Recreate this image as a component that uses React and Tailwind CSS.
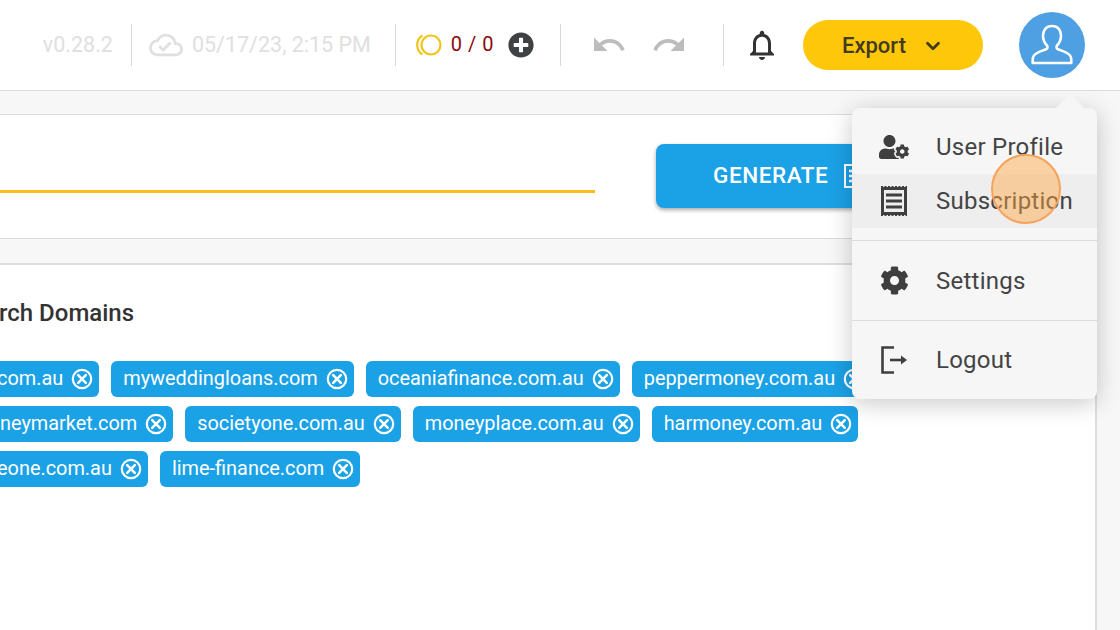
import React from 'react';
import { FaCog, FaPlusCircle, FaUserCog } from 'react-icons/fa';
import { MdNotificationsNone, MdOutlineCloudDone, MdRedo, MdUndo } from 'react-icons/md';
import { FiChevronDown } from 'react-icons/fi';

const rows = [
  { first: 'com.au', offset: '-ml-[3px]', rest: ['myweddingloans.com', 'oceaniafinance.com.au', 'peppermoney.com.au'] },
  { first: 'neymarket.com', offset: 'ml-0', rest: ['societyone.com.au', 'moneyplace.com.au', 'harmoney.com.au'] },
  { first: 'eone.com.au', offset: '-ml-[3px]', rest: ['lime-finance.com'] },
];

function RemoveIcon() {
  return (
    <svg width="22" height="22" viewBox="0 0 22 22" fill="none" stroke="white" strokeWidth="2.200" strokeLinecap="round" className="shrink-0">
      <circle cx="11" cy="11" r="9.200" />
      <path d="M7.200 7.200l7.600 7.600M14.800 7.200l-7.600 7.600" strokeWidth="2.600" />
    </svg>
  );
}

function Chip({ label, cut }) {
  return (
    <div className={`flex h-9 shrink-0 items-center gap-2 bg-[#1ba1e6] pr-[6px] text-[19.9px] text-white ${cut ? 'rounded-r-md' : 'rounded-md pl-3'}`}>
      <span className="pb-px">{label}</span>
      <RemoveIcon />
    </div>
  );
}

function Divider({ className }) {
  return <div className={`h-[42px] w-px bg-[#d8d8d8] ${className}`} />;
}

function ReceiptIcon() {
  return (
    <svg width="28" height="30" viewBox="0 0 28 30" fill="none" stroke="#3f3f3f">
      <rect x="2.500" y="2.500" width="23" height="25" strokeWidth="3" />
      <path d="M1 1h26M1 29h26" strokeWidth="2" strokeDasharray="2 1.500" />
      <path d="M6 9h16M6 15h16M6 21h16" strokeWidth="3" />
    </svg>
  );
}

function LogoutIcon() {
  return (
    <svg width="28" height="28" viewBox="0 0 28 28" fill="none" stroke="#3f3f3f" strokeWidth="2.600">
      <path d="M14 1.500H2.500v25H14" />
      <path d="M10 14h15" />
      <path d="M21 9.500l6 4.500-6 4.500z" fill="#3f3f3f" stroke="none" />
    </svg>
  );
}

function AvatarIcon() {
  return (
    <svg width="42" height="42" viewBox="0 0 42 42" fill="none" stroke="white" strokeWidth="2.600" strokeLinejoin="round">
      <path d="M21 2c-6 0-9 4.500-9 9.500 0 4 1.500 7.500 4 10 1 1.200 .5 3-1 3.800-4 1.700-12 3.200-13 8.200-.3 1.500-.3 4-.3 5.500h38.600c0-1.500 0-4-.3-5.500-1-5-9-6.500-13-8.200-1.500-.8-2-2.600-1-3.800 2.500-2.500 4-6 4-10C30 6.500 27 2 21 2z" />
    </svg>
  );
}

function CoinsIcon() {
  return (
    <svg width="26" height="22" viewBox="0 0 26 22" fill="none" stroke="#f0c419" strokeWidth="2.200">
      <circle cx="15" cy="11" r="9.500" />
      <path d="M6.500 1.500C3 3.500 1.200 7 1.200 11s1.800 7.500 5.300 9.500" />
    </svg>
  );
}

function GenerateIcon() {
  return (
    <svg width="24" height="24" viewBox="0 0 24 24" fill="none" stroke="white" className="shrink-0">
      <rect x="1" y="1" width="22" height="22" strokeWidth="2" />
      <path d="M5 7h14M5 12h14M5 17h14" strokeWidth="2.500" />
    </svg>
  );
}

function MenuRow({ icon, label, active, className }) {
  return (
    <div className={`flex items-center pl-7 text-[24px] tracking-[0.25px] text-[#444] ${active ? 'bg-[#eeeeee]' : ''} ${className}`}>
      <div className="flex w-[56px] shrink-0 items-center">{icon}</div>
      <span className="whitespace-nowrap">{label}</span>
    </div>
  );
}

export default function App() {
  return (
    <div className="relative h-[630px] w-[1120px] overflow-hidden bg-[#f7f7f7] font-['Roboto',sans-serif]">
      <header className="flex h-[91px] items-center justify-end border-b border-[#dcdcdc] bg-white pr-[35px]">
        <span className="text-[21.5px] text-[#e0e0e0]">v0.28.2</span>
        <Divider className="ml-[18px]" />
        <MdOutlineCloudDone size={34} className="ml-[17px] text-[#e0e0e0]" />
        <span className="ml-[9px] text-[21.5px] text-[#e0e0e0]">05/17/23, 2:15 PM</span>
        <Divider className="ml-[24px]" />
        <div className="ml-[20px]"><CoinsIcon /></div>
        <span className="mb-[3px] ml-[9px] text-[20px] tracking-wide text-[#8b0a0a]">0 / 0</span>
        <FaPlusCircle size={26} className="ml-[14px] text-[#3f4244]" />
        <Divider className="ml-[26px]" />
        <MdUndo size={36} className="ml-[30px] text-[#bdbdbd]" />
        <MdRedo size={36} className="ml-[24px] text-[#bdbdbd]" />
        <Divider className="ml-[36px]" />
        <MdNotificationsNone size={36} className="ml-[20px] text-[#333]" />
        <button className="ml-[23px] flex h-[50px] w-[180px] items-center justify-center gap-[16px] rounded-full bg-[#ffc709] pt-px text-[22px] font-medium text-[#423a1e]">
          Export
          <FiChevronDown size={22} strokeWidth={3} />
        </button>
        <div className="ml-[36px] flex h-[66px] w-[66px] items-center justify-center rounded-full bg-[#4f9fe3]">
          <AvatarIcon />
        </div>
      </header>

      <main className="mt-[23px] mr-[23px] flex flex-col">
        <section className="flex h-[125px] items-center border-y border-[#dcdcdc] bg-white">
          <div className="mt-[30px] h-[3px] w-[595px] shrink-0 bg-[#fbbc1e]" />
          <button className="mr-2 mb-[2px] ml-[61px] flex h-[64px] flex-1 items-center gap-4 rounded-l-lg bg-[#1ba1e6] pl-[57px] text-[22.5px] font-medium tracking-wide text-white shadow-[0_2px_4px_rgba(0,0,0,0.35)]">
            GENERATE
            <GenerateIcon />
          </button>
        </section>
        <section className="mt-[24px] h-[370px] border-t-2 border-r-2 border-[#dedede] bg-white pt-[34px]">
          <h2 className="-ml-px text-[24px] leading-[28px] font-medium whitespace-nowrap text-[#333]">rch Domains</h2>
          <div className="mt-[34px] flex flex-col gap-[9px]">
            {rows.map((row) => (
              <div key={row.first} className={`flex gap-3 ${row.offset}`}>
                <Chip label={row.first} cut />
                {row.rest.map((d) => <Chip key={d} label={d} />)}
              </div>
            ))}
          </div>
        </section>
      </main>

      <div className="absolute top-[108px] left-[852px] w-[245px] rounded-lg bg-[#f6f6f6] pt-3 shadow-[0_4px_24px_rgba(0,0,0,0.22)]">
        <div className="absolute -top-[10px] left-[208px] h-5 w-5 rotate-45 bg-[#f6f6f6]" />
        <div className="relative">
          <MenuRow icon={<FaUserCog size={30} className="-ml-px text-[#3f3f3f]" />} label="User Profile" className="h-[54px]" />
          <MenuRow icon={<ReceiptIcon />} label="Subscription" active className="h-[54px]" />
          <div className="mt-3 border-t border-[#dddddd]" />
          <MenuRow icon={<FaCog size={29} className="text-[#3f3f3f]" />} label="Settings" className="h-[79px]" />
          <div className="border-t border-[#dddddd]" />
          <MenuRow icon={<LogoutIcon />} label="Logout" className="h-[78px]" />
        </div>
      </div>

      <div className="absolute top-[154px] left-[991px] h-[70px] w-[70px] rounded-full border-2 border-[#f5a35c] bg-[#ffa53c]/45" />
    </div>
  );
}
